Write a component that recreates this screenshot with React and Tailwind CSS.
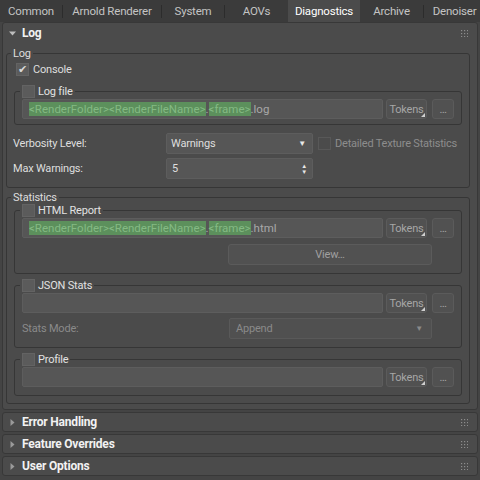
import React from 'react';

const Dots = () => (
    <svg width="7" height="7" viewBox="0 0 7 7" className="shrink-0">
        {[0, 3, 6].map((y) =>
            [0, 3, 6].map((x) => <rect key={`${x}-${y}`} x={x} y={y} width="1.2" height="1.2" fill="#8c8c8c" />)
        )}
    </svg>
);

const Tri = ({ open }) => (
    <svg width="7" height="7" viewBox="0 0 7 7" className="shrink-0">
        {open ? <path d="M0 1.5 L7 1.5 L3.5 5.5 Z" fill="#bdbdbd" /> : <path d="M1.5 0 L5.5 3.5 L1.5 7 Z" fill="#9a9a9a" />}
    </svg>
);

const Check = ({ checked, disabled }) => (
    <div
        className={`w-[13px] h-[13px] shrink-0 border flex items-center justify-center ${
            disabled ? 'bg-[#4b4b4b] border-[#585858]' : 'bg-[#5b5b5b] border-[#636363]'
        }`}
    >
        {checked && <span className="text-[11px] leading-none text-[#d8d8d8]">✔</span>}
    </div>
);

const Tabs = () => {
    const tabs = [
        ['Common', 62],
        ['Arnold Renderer', 99],
        ['System', 63],
        ['AOVs', 64],
        ['Diagnostics', 72],
        ['Archive', 63],
        ['Denoiser', 62],
    ];
    return (
        <div className="flex h-[22px] bg-[#3b3b3b]">
            {tabs.map(([name, w], i) => {
                const active = name === 'Diagnostics';
                const prevActive = i > 0 && tabs[i - 1][0] === 'Diagnostics';
                return (
                    <div key={name} className="flex items-center shrink-0" style={{ width: w }}>
                        {i > 0 && !active && !prevActive && <div className="w-px h-[13px] bg-[#2c2c2c]" />}
                        <div
                            className={`flex-1 h-full flex items-center justify-center text-[11.5px] ${
                                active ? 'bg-[#4b4b4b] text-white' : 'text-[#c4c4c4]'
                            }`}
                        >
                            {name}
                        </div>
                    </div>
                );
            })}
        </div>
    );
};

const Field = ({ children, className = '' }) => (
    <div className={`h-[20px] bg-[#565656] border border-[#5d5d5d] rounded-[2px] flex items-center pl-[6px] ${className}`}>
        {children}
    </div>
);

const Green = ({ children }) => <span className="bg-[#5c905c] text-[#84ba84]">{children}</span>;

const PathText = ({ ext }) => (
    <span className="whitespace-nowrap text-[11.5px] tracking-normal">
        <Green>&lt;RenderFolder&gt;&lt;RenderFileName&gt;</Green>
        <span className="text-[#a8a8a8]">.</span>
        <Green>&lt;frame&gt;</Green>
        <span className="text-[#a8a8a8]">{ext}</span>
    </span>
);

const FileRow = ({ children }) => (
    <div className="flex items-center h-[20px] mt-[1px]">
        <Field className="flex-1">{children}</Field>
        <div className="relative ml-[3px] w-[41px] h-[20px] bg-[#515151] border border-[#5b5b5b] rounded-[3px] flex items-center justify-center text-[#a6a6a6]">
            Tokens
            <div className="absolute right-[1px] bottom-[1px] w-0 h-0 border-l-[4px] border-l-transparent border-b-[4px] border-b-[#cfcfcf]" />
        </div>
        <div className="ml-[5px] w-[22px] h-[20px] bg-[#515151] border border-[#5b5b5b] rounded-[3px] flex items-center justify-center text-[#a6a6a6]">
            …
        </div>
    </div>
);

const SubGroup = ({ label, children, className = '' }) => (
    <fieldset className={`border border-[#363636] rounded-[3px] px-[7px] ${className}`}>
        <legend className="ml-[-2px] px-[2px] h-[13px] flex items-center gap-[3px] text-[#e2e2e2]">
            <Check />
            <span>{label}</span>
        </legend>
        {children}
    </fieldset>
);

const Rollout = ({ title, open, children }) => (
    <div className="border border-[#383838] rounded-[3px] bg-[#4b4b4b]">
        <div className={`${open ? 'h-[20px]' : 'h-[18px] pt-[1px]'} flex items-center pl-[6px] pr-[9px]`}>
            <Tri open={open} />
            <span className="ml-[6px] font-bold text-[12px] text-[#f2f2f2]">{title}</span>
            <div className="flex-1" />
            <Dots />
        </div>
        {children}
    </div>
);

export default function App() {
    return (
        <div className="w-[480px] h-[480px] overflow-hidden bg-[#444444] text-[11px] tracking-[-0.2px] leading-[13px] text-[#dedede] font-['Roboto',sans-serif]">
            <Tabs />
            <div className="flex flex-col gap-[2px] px-[2px]">
                <Rollout title="Log" open>
                    <div className="pl-[3px] pr-[7px] pb-[5px]">
                        {/* Log group */}
                        <fieldset className="border border-[#363636] rounded-[3px] px-[7px] pb-[8px] mt-[4px]">
                            <legend className="ml-[-3px] px-[2px] h-[13px]">Log</legend>
                            <div className="flex items-center gap-[4px] h-[14px] mt-[2px] ml-[2px]">
                                <Check checked />
                                <span>Console</span>
                            </div>
                            <SubGroup label="Log file" className="mt-[9px] pb-[5px]">
                                <FileRow>
                                    <PathText ext=".log" />
                                </FileRow>
                            </SubGroup>
                            <div className="flex items-center h-[21px] mt-[8px]">
                                <span className="w-[153px] -ml-[1px]">Verbosity Level:</span>
                                <div className="w-[147px] h-[21px] bg-[#565656] border border-[#5d5d5d] rounded-[2px] flex items-center pl-[4px] pr-[6px]">
                                    <span className="flex-1">Warnings</span>
                                    <span className="text-[8px] text-[#e8e8e8]">▼</span>
                                </div>
                                <div className="ml-[5px] flex items-center gap-[4px]">
                                    <Check disabled />
                                    <span className="text-[#8d8d8d] whitespace-nowrap">Detailed Texture Statistics</span>
                                </div>
                            </div>
                            <div className="flex items-center h-[21px] mt-[4px]">
                                <span className="w-[153px] -ml-[1px]">Max Warnings:</span>
                                <div className="w-[147px] h-[21px] bg-[#565656] border border-[#5d5d5d] rounded-[2px] flex items-center pl-[5px] pr-[5px]">
                                    <span className="flex-1">5</span>
                                    <span className="flex flex-col text-[6px] leading-[6px] text-[#e8e8e8]">
                                        <span>▲</span>
                                        <span>▼</span>
                                    </span>
                                </div>
                            </div>
                        </fieldset>

                        {/* Statistics group */}
                        <fieldset className="border border-[#363636] rounded-[3px] px-[7px] pb-[7px] mt-[3px]">
                            <legend className="ml-[-3px] px-[2px] h-[13px]">Statistics</legend>
                            <SubGroup label="HTML Report" className="pb-[8px]">
                                <FileRow>
                                    <PathText ext=".html" />
                                </FileRow>
                                <div className="flex mt-[6px]">
                                    <div className="ml-[206px] w-[204px] h-[21px] bg-[#515151] border border-[#5b5b5b] rounded-[3px] flex items-center justify-center text-[#a0a0a0]">
                                        View…
                                    </div>
                                </div>
                            </SubGroup>
                            <SubGroup label="JSON Stats" className="mt-[5px] pb-[8px]">
                                <FileRow />
                                <div className="flex items-center mt-[5px] h-[21px]">
                                    <span className="w-[207px] text-[#8a8a8a]">Stats Mode:</span>
                                    <div className="w-[203px] h-[21px] bg-[#505050] border border-[#595959] rounded-[2px] flex items-center pl-[6px] pr-[8px] text-[#8a8a8a]">
                                        <span className="flex-1">Append</span>
                                        <span className="text-[8px]">▼</span>
                                    </div>
                                </div>
                            </SubGroup>
                            <SubGroup label="Profile" className="mt-[5px] pb-[8px]">
                                <FileRow />
                            </SubGroup>
                        </fieldset>
                    </div>
                </Rollout>
                <Rollout title="Error Handling" />
                <Rollout title="Feature Overrides" />
                <Rollout title="User Options" />
            </div>
        </div>
    );
}
